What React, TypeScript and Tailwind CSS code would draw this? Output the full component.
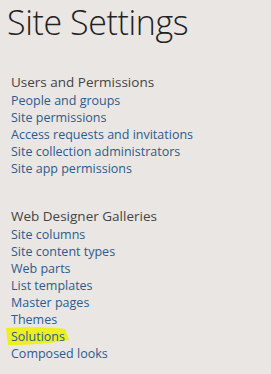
import React from "react";

const users = [
  "People and groups",
  "Site permissions",
  "Access requests and invitations",
  "Site collection administrators",
  "Site app permissions",
];
const galleries = [
  "Site columns",
  "Site content types",
  "Web parts",
  "List templates",
  "Master pages",
  "Themes",
  "Solutions",
  "Composed looks",
];

function Section({ title, links }: { title: string; links: string[] }) {
  return (
    <div className="flex flex-col">
      <div className="text-[13.5px] leading-[17px] text-[#444444] mb-[1px]">{title}</div>
      {links.map((l) => (
        <div key={l} className="relative text-[12.5px] leading-[17px] text-[#2d5b8e]">
          {l === "Solutions" && (
            <svg className="absolute left-[-6px] top-[-2px]" width="66" height="20" viewBox="0 0 66 20">
              <path d="M1 2 C20 1 45 1 60 3 L64 14 C50 17 25 19 3 19 Z" fill="#ecf01e" />
            </svg>
          )}
          <span className="relative">{l}</span>
        </div>
      ))}
    </div>
  );
}

export default function App() {
  return (
    <div
      className="w-[271px] h-[374px] bg-[#e9e6e3] overflow-hidden"
      style={{ fontFamily: '"Open Sans", "Noto Sans", "Liberation Sans", sans-serif' }}
    >
      <div className="pl-[7px] pt-[0px] text-[34px] leading-[44px] font-light text-[#222222] tracking-[-0.4px] whitespace-nowrap">
        Site Settings
      </div>
      <div className="pl-[11px] pt-[30px] flex flex-col gap-[31px]">
        <Section title="Users and Permissions" links={users} />
        <Section title="Web Designer Galleries" links={galleries} />
      </div>
    </div>
  );
}
